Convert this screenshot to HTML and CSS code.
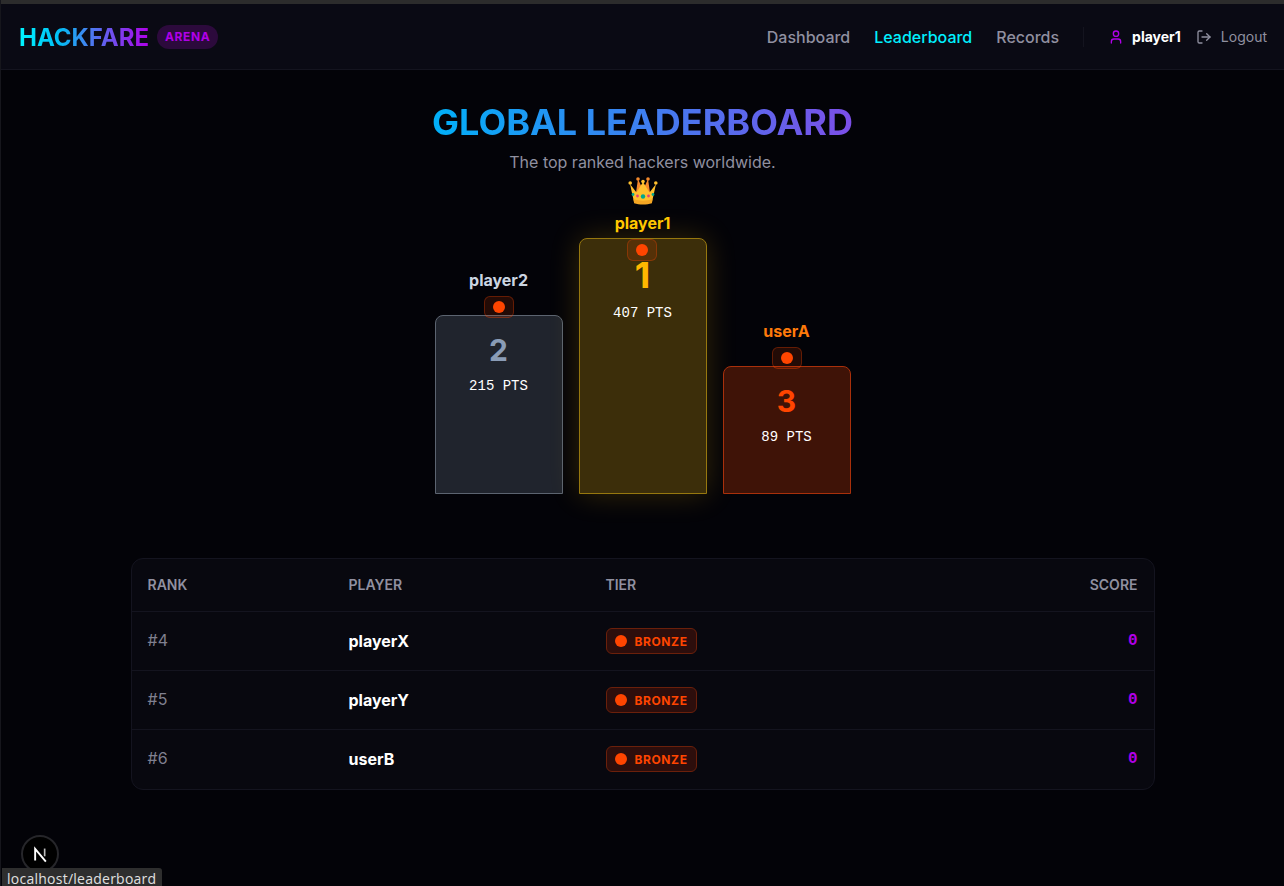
FILE: index.html
```html
<!DOCTYPE html>
<html lang="en">
<head>
<meta charset="utf-8">
<title>Hackfare Arena - Leaderboard</title>
<link rel="stylesheet" href="styles.css">
</head>
<body>
<div class="chrome-strip"></div>
<header class="topbar">
  <div class="brand">
    <span class="logo">HACKFARE</span>
    <span class="arena">ARENA</span>
  </div>
  <nav class="nav">
    <a class="nav-link">Dashboard</a>
    <a class="nav-link active">Leaderboard</a>
    <a class="nav-link">Records</a>
    <span class="divider"></span>
    <span class="user">
      <svg class="user-icon" viewBox="0 0 24 24" fill="none" stroke="currentColor" stroke-width="2" stroke-linecap="round" stroke-linejoin="round"><path d="M19 21v-2a4 4 0 0 0-4-4H9a4 4 0 0 0-4 4v2"/><circle cx="12" cy="7" r="4"/></svg>
      <span class="user-name">player1</span>
    </span>
    <span class="logout">
      <svg class="logout-icon" viewBox="0 0 24 24" fill="none" stroke="currentColor" stroke-width="2" stroke-linecap="round" stroke-linejoin="round"><path d="M9 21H5a2 2 0 0 1-2-2V5a2 2 0 0 1 2-2h4"/><path d="m16 17 5-5-5-5"/><path d="M21 12H9"/></svg>
      <span>Logout</span>
    </span>
  </nav>
</header>
<main class="page">
  <h1 class="title">GLOBAL LEADERBOARD</h1>
  <p class="subtitle">The top ranked hackers worldwide.</p>
  <section class="podium">
    <div class="place second">
      <span class="pname">player2</span>
      <span class="medal"><i class="dot"></i></span>
      <div class="bar">
        <span class="num">2</span>
        <span class="pts">215 PTS</span>
      </div>
    </div>
    <div class="place first">
      <svg class="crown" viewBox="0 0 30 30">
        <path d="M10 3 7.500 20h15L20 3l-5 11z" fill="#f4892b"/>
        <path d="M2 8l4 18h18l4-18-6.500 8.500L15 6l-6.500 10.500z" fill="#ffc02e"/>
        <path d="M5.500 23c6 2.200 13 2.200 19 0l-.6 4.200c-5 1.800-12.800 1.800-17.800 0z" fill="#f5a623"/>
        <circle cx="2.200" cy="7" r="1.800" fill="#ffc02e"/>
        <circle cx="27.800" cy="7" r="1.800" fill="#ffc02e"/>
        <circle cx="10" cy="3" r="1.800" fill="#f4892b"/>
        <circle cx="20" cy="3" r="1.800" fill="#f4892b"/>
        <circle cx="15" cy="5.500" r="1.800" fill="#ffc02e"/>
        <circle cx="15" cy="20.500" r="2.200" fill="#00a78e"/>
        <circle cx="9.500" cy="20" r="1.400" fill="#e2407a"/>
        <circle cx="20.500" cy="20" r="1.400" fill="#e2407a"/>
        <circle cx="5" cy="18.500" r="1.400" fill="#00a78e"/>
        <circle cx="25" cy="18.500" r="1.400" fill="#00a78e"/>
      </svg>
      <span class="pname">player1</span>
      <span class="medal"><i class="dot"></i></span>
      <div class="bar">
        <span class="num">1</span>
        <span class="pts">407 PTS</span>
      </div>
    </div>
    <div class="place third">
      <span class="pname">userA</span>
      <span class="medal"><i class="dot"></i></span>
      <div class="bar">
        <span class="num">3</span>
        <span class="pts">89 PTS</span>
      </div>
    </div>
  </section>
  <section class="board">
    <div class="row head">
      <span>RANK</span><span>PLAYER</span><span>TIER</span><span class="right">SCORE</span>
    </div>
    <div class="row">
      <span class="rank">#4</span><span class="player">playerX</span>
      <span><span class="tier"><i class="dot"></i>BRONZE</span></span><span class="score">0</span>
    </div>
    <div class="row">
      <span class="rank">#5</span><span class="player">playerY</span>
      <span><span class="tier"><i class="dot"></i>BRONZE</span></span><span class="score">0</span>
    </div>
    <div class="row">
      <span class="rank">#6</span><span class="player">userB</span>
      <span><span class="tier"><i class="dot"></i>BRONZE</span></span><span class="score">0</span>
    </div>
  </section>
</main>
<div class="dev-badge">
  <svg viewBox="0 0 16 16" class="dev-n"><path d="M3.500 13V3.300L12.500 14" fill="none" stroke="#fff" stroke-width="1.600"/><path d="M11.500 3v6.500" stroke="#bbb" stroke-width="1.400"/></svg>
</div>
<div class="status">localhost/leaderboard</div>
</body>
</html>
```
FILE: styles.css
```css
* { box-sizing: border-box; }
html, body { margin: 0; height: 100%; }
body {
  position: relative;
  width: 1284px;
  height: 886px;
  overflow: hidden;
  background: #030308;
  color: #fff;
  font-family: Inter, "Liberation Sans", sans-serif;
  border-left: 1px solid #16161c;
}
.chrome-strip { height: 4px; background: #2c2c2c; }
.topbar {
  height: 66px;
  display: flex;
  align-items: center;
  justify-content: space-between;
  padding: 0 17px 0 18px;
  background: #0a0a14;
  border-bottom: 1px solid #14141f;
}
.brand { display: flex; align-items: center; gap: 8px; }
.logo {
  font-size: 24px;
  font-weight: 700;
  line-height: 32px;
  margin-top: 2px;
  background: linear-gradient(90deg, #00f5ff 0%, #00c0f5 30%, #4a7cf0 55%, #b000e8 100%);
  -webkit-background-clip: text;
  background-clip: text;
  color: transparent;
}
.arena {
  height: 24px;
  padding: 0 8px;
  display: flex;
  align-items: center;
  border-radius: 12px;
  background: #2c0a3c;
  color: #b000e8;
  font-size: 12px;
  font-weight: 700;
  letter-spacing: .6px;
}
.nav { display: flex; align-items: center; }
.nav-link { font-size: 16px; font-weight: 500; color: #9090a0; margin-right: 24px; line-height: 24px; }
.nav-link.active { color: #00f0ff; }
.divider { width: 1px; height: 20px; background: #14141f; margin-right: 24px; }
.user { display: flex; align-items: center; gap: 8px; margin-right: 15px; }
.user-icon { width: 16px; height: 16px; color: #b000e8; }
.user-name { font-size: 14px; font-weight: 700; color: #fff; }
.logout { display: flex; align-items: center; gap: 9px; font-size: 14px; color: #9090a0; }
.logout-icon { width: 16px; height: 16px; }
.page { display: flex; flex-direction: column; align-items: center; }
.title {
  margin: 32px 0 0;
  font-size: 36px;
  line-height: 40px;
  font-weight: 700;
  background: linear-gradient(90deg, #00b0f8, #7c4ee8);
  -webkit-background-clip: text;
  background-clip: text;
  color: transparent;
}
.subtitle { margin: 8px 0 0; font-size: 16px; line-height: 24px; color: #9090a0; }
.podium { margin-top: 2px; height: 318px; display: flex; align-items: flex-end; gap: 16px; }
.place { width: 128px; display: flex; flex-direction: column; align-items: center; }
.crown { width: 30px; height: 30px; margin-bottom: 5px; }
.pname { font-size: 16px; font-weight: 700; line-height: 24px; margin-bottom: 4px; }
.medal {
  position: relative;
  z-index: 1;
  width: 30px;
  height: 22px;
  display: flex;
  align-items: center;
  justify-content: center;
  border-radius: 6px;
  background: rgba(255, 69, 0, .13);
  border: 1px solid rgba(255, 69, 0, .3);
  margin-bottom: -3px;
}
.dot { width: 12px; height: 12px; border-radius: 50%; background: #ff4500; flex: none; }
.bar {
  width: 100%;
  display: flex;
  flex-direction: column;
  align-items: center;
  border: 1px solid;
  border-radius: 8px 8px 0 0;
  padding-top: 16px;
}
.num { font-size: 30px; font-weight: 700; line-height: 36px; }
.pts { font-family: "Liberation Mono", monospace; font-size: 14px; line-height: 20px; color: #fff; margin-top: 8px; }
.second .pname { color: #cbd5e1; }
.second .bar { height: 179px; background: #20242d; border-color: #5c6470; }
.second .num { color: #8a9cb6; }
.first .pname { color: #ffc800; }
.first .medal { margin-bottom: -23px; margin-right: 2px; }
.first .bar { height: 256px; background: #3c2e0a; border-color: #97780f; box-shadow: 0 0 30px rgba(255, 190, 0, .2); }
.first .num { color: #ffb700; font-size: 36px; line-height: 40px; }
.first .pts { margin-top: 8px; }
.third .pname { color: #ff7a0a; }
.third .bar { height: 128px; background: #3f1307; border-color: #a9300b; }
.third .num { color: #ff4500; }
.board {
  margin-top: 64px;
  width: 1024px;
  border: 1px solid #14141f;
  border-radius: 12px;
  background: #08080f;
  overflow: hidden;
}
.row {
  display: grid;
  grid-template-columns: 201px 257px 1fr 100px;
  align-items: center;
  height: 59px;
  padding: 0 16px;
  border-top: 1px solid #14141f;
}
.row:last-child { height: 60px; padding-bottom: 1px; }
.row.head {
  height: 52px;
  padding-bottom: 2px;
  border-top: 0;
  font-size: 14px;
  font-weight: 600;
  color: #9090a0;
}
.right { text-align: right; }
.rank { font-size: 16px; color: #808090; position: relative; top: -1px; }
.player { font-size: 16px; font-weight: 700; color: #fff; }
.score { text-align: right; font-family: "Liberation Mono", monospace; font-size: 16px; font-weight: 700; color: #b000e8; }
.tier {
  display: inline-flex;
  align-items: center;
  gap: 8px;
  height: 26px;
  padding: 0 8px;
  border-radius: 6px;
  background: #2d0e0c;
  border: 1px solid #6b200b;
  color: #ff4500;
  font-size: 12px;
  font-weight: 700;
  letter-spacing: .6px;
  vertical-align: middle;
}
.dev-badge {
  position: absolute;
  left: 20px;
  top: 835px;
  width: 38px;
  height: 38px;
  border-radius: 50%;
  background: #000;
  border: 2px solid #26262a;
  display: flex;
  align-items: center;
  justify-content: center;
}
.dev-n { width: 19px; height: 19px; }
.status {
  position: absolute;
  left: 1px;
  top: 868px;
  height: 18px;
  padding: 0 6px 0 5px;
  background: #2e2e2e;
  border-radius: 0 3px 0 0;
  color: #e0e0e0;
  font-family: "Open Sans", "Noto Sans", sans-serif;
  font-size: 14px;
  letter-spacing: .25px;
  line-height: 22px;
}
```
